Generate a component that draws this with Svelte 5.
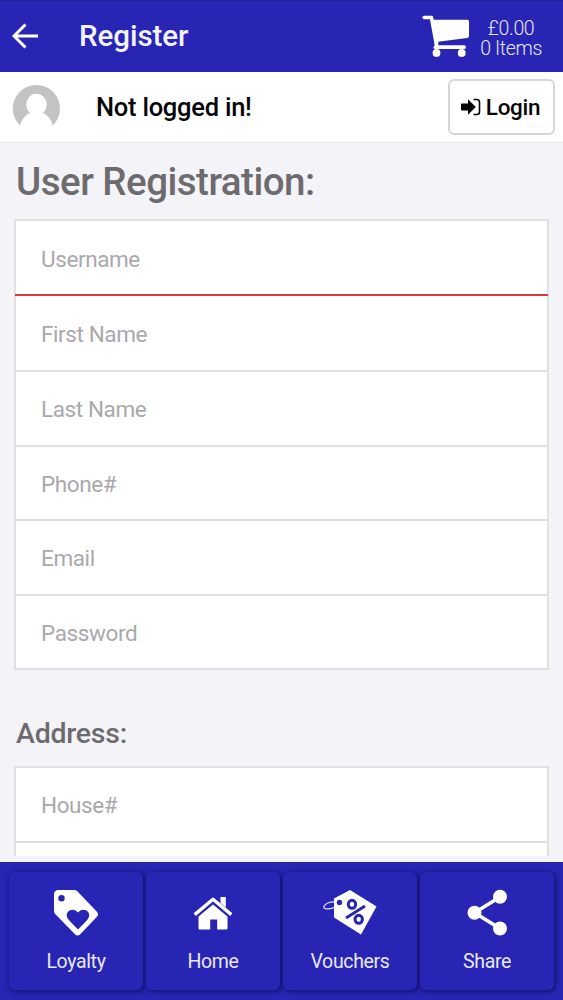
<script>
  const userFields = [
    { label: 'Username', type: 'text', invalid: true },
    { label: 'First Name', type: 'text' },
    { label: 'Last Name', type: 'text' },
    { label: 'Phone#', type: 'tel' },
    { label: 'Email', type: 'email' },
    { label: 'Password', type: 'password' }
  ];

  const addressFields = [
    { label: 'House#', type: 'text' },
    { label: 'Street', type: 'text' }
  ];

  const tabs = ['Loyalty', 'Home', 'Vouchers', 'Share'];

  let basket = $state({ total: 0, items: 0 });
</script>

{#snippet fieldList(fields)}
  <div class="list">
    {#each fields as field}
      <div class="item" class:invalid={field.invalid}>
        <input type={field.type} placeholder={field.label} aria-label={field.label} />
      </div>
    {/each}
  </div>
{/snippet}

<div class="page">
  <header class="navbar">
    <button class="back" aria-label="Back">
      <svg width="26" height="26" viewBox="0 0 26 26">
        <path d="M13.5 1.5 2 13l11.5 11.5M2 13h24" fill="none" stroke="#fff" stroke-width="3" />
      </svg>
    </button>
    <h1>Register</h1>
    <div class="basket">
      <svg width="48" height="42" viewBox="0 0 48 42">
        <path d="M2.2 2.500h7.300l4.700 26" fill="none" stroke="#fff" stroke-width="3.600" stroke-linecap="round" stroke-linejoin="round" />
        <path d="M10.500 4.800h34.800q1.700 0 1.700 1.800v14.200q0 1.800-1.800 2.100L14 27z" fill="#fff" />
        <path d="M14.500 25v6" stroke="#fff" stroke-width="3.600" />
        <path d="M13.500 32.200h28.500" stroke="#fff" stroke-width="3.800" stroke-linecap="round" />
        <circle cx="14.500" cy="37.900" r="3.900" fill="#fff" />
        <circle cx="39.700" cy="37.900" r="3.900" fill="#fff" />
      </svg>
      <div class="totals">
        £{basket.total.toFixed(2)}<br />{basket.items} Items
      </div>
    </div>
  </header>

  <section class="userbar">
    <svg class="avatar" width="48" height="48" viewBox="0 0 48 48">
      <path
        d="M8 42.500A23.600 23.600 0 1 1 40.800 42.500C39 36.500 36 32 30.800 30A10.200 10.800 0 1 0 18.200 30C13 32 9.800 36.500 8 42.500z"
        fill="#c4c3c3"
      />
    </svg>
    <span class="status">Not logged in!</span>
    <button class="login">
      <svg width="20" height="18" viewBox="0 0 20 18">
        <path d="M.8 5.500H7V1.300L14.800 9 7 16.700v-4.200H.8q-.8 0-.8-.8V6.300q0-.8.8-.8z" fill="#000" />
        <path d="M12.500 1.500h3.200q2.800 0 2.800 2.800v9.400q0 2.800-2.800 2.800h-3.200" fill="none" stroke="#000" stroke-width="1.600" />
      </svg>
      Login
    </button>
  </section>

  <main class="content">
    <h2>User Registration:</h2>
    {@render fieldList(userFields)}

    <h3>Address:</h3>
    {@render fieldList(addressFields)}
  </main>

  <footer class="tabbar">
    {#each tabs as tab}
      <button class="tab">
        <svg width="56" height="48" viewBox="0 0 56 48">
          {#if tab === 'Loyalty'}
            <path
              fill="#fff"
              fill-rule="evenodd"
              d="M10.500 1H26q2 0 3.300 1.300L48.700 22.500q2.700 2.800 0 5.600L32.300 45.300q-2.700 2.600-5.300 0L7.400 25.300Q6 23.800 6 22V5.500Q6 1 10.500 1zM13.500 6a3.200 3.200 0 1 0 0 6.400 3.200 3.200 0 1 0 0-6.400zM30 40.500 20.800 31C16 25.500 20.500 20.500 25 20.800Q28 21 30 23.600Q32 21 35 20.800C39.500 20.500 44 25.500 39.200 31z"
            />
          {:else if tab === 'Home'}
            <path
              fill="#fff"
              d="M13.500 27.500 28 15.500 42.500 27.500V39.500q0 1-1 1H32.200V30.500H25.200V40.500H14.500q-1 0-1-1z"
            />
            <path fill="#fff" d="M35.500 8h5.300v10.500l-5.300-4.500z" />
            <path
              d="M9.700 25.600 28 10.200 46.300 25.600"
              fill="none"
              stroke="#fff"
              stroke-width="3.400"
              stroke-linejoin="round"
            />
            <path d="M11.400 27.900 28 13.900 44.600 27.900" fill="none" stroke="#2825b5" stroke-width="1.100" />
          {:else if tab === 'Vouchers'}
            <path fill="#fff" d="M12 9.500 28 1 54.500 17.500 39 45.500 12 28.500z" />
            <circle cx="17.500" cy="13.500" r="2.700" fill="#2825b5" />
            <path
              d="M12 18.600C6 20.800 .8 20 1.800 17.400C3 14.500 8 12.800 12 12.800"
              fill="none"
              stroke="#dcdcff"
              stroke-width="1.200"
            />
            <g fill="none" stroke="#2825b5">
              <ellipse cx="30" cy="15.300" rx="3.700" ry="4" stroke-width="3" />
              <ellipse cx="36.700" cy="30.300" rx="3.700" ry="4" stroke-width="3" />
              <path d="M43 17 24 29" stroke-width="2.800" />
            </g>
          {:else}
            <path d="M41 8 15.500 23.700 41 39.500" fill="none" stroke="#fff" stroke-width="3.600" />
            <circle cx="41" cy="7.800" r="7" fill="#fff" />
            <circle cx="15.500" cy="23.700" r="7" fill="#fff" />
            <circle cx="41" cy="39.500" r="7" fill="#fff" />
          {/if}
        </svg>
        <span>{tab}</span>
      </button>
    {/each}
  </footer>
</div>

<style>
  :global(body) {
    margin: 0;
    overflow: hidden;
  }

  .page {
    display: flex;
    flex-direction: column;
    height: 1000px;
    background: #f4f3f7;
    font-family: Roboto, sans-serif;
    overflow: hidden;
  }

  button {
    font-family: inherit;
    border: none;
    padding: 0;
    background: none;
    cursor: pointer;
  }

  svg {
    display: block;
    flex: none;
  }

  h1,
  h2,
  h3 {
    margin: 0;
    font-weight: 500;
  }

  .navbar {
    display: flex;
    align-items: center;
    flex: none;
    height: 72px;
    box-sizing: border-box;
    padding: 0 21px 1px 12px;
    background: #2825b5;
    color: #f3f3ff;
    border-top: 1px solid #201e90;
  }

  h1 {
    margin-left: 41px;
    font-size: 29.5px;
    line-height: 36px;
    letter-spacing: -0.05px;
  }

  .basket {
    display: flex;
    align-items: center;
    gap: 10px;
    margin-left: auto;
  }

  .totals {
    padding-top: 5px;
    font-size: 19.5px;
    font-weight: 300;
    line-height: 19.5px;
    letter-spacing: -0.35px;
    text-align: center;
    color: #e6e6ff;
  }

  .userbar {
    display: flex;
    align-items: center;
    flex: none;
    height: 71px;
    box-sizing: border-box;
    padding: 0 8px 0 12px;
    background: #fff;
    border-bottom: 1px solid #e8e7ea;
  }

  .status {
    margin-left: 36px;
    font-size: 25.5px;
    font-weight: 500;
    letter-spacing: -0.25px;
    color: #050505;
  }

  .login {
    display: flex;
    align-items: center;
    justify-content: center;
    gap: 5px;
    box-sizing: border-box;
    width: 107px;
    height: 56px;
    margin-left: auto;
    padding: 0 2px 1px 0;
    border: 2px solid #d6d5d7;
    border-radius: 6px;
    font-size: 22.5px;
    font-weight: 500;
    letter-spacing: -0.3px;
    color: #050505;
  }

  .content {
    flex: 1;
    min-height: 0;
    padding: 15px 14px 0;
    margin-bottom: 6px;
    overflow: hidden;
  }

  h2 {
    padding-left: 2px;
    margin-bottom: 13px;
    font-size: 38.5px;
    line-height: 48px;
    letter-spacing: -0.5px;
    color: #6d6b70;
  }

  h3 {
    padding-left: 2px;
    margin: 46px 0 13.6px;
    font-size: 28.5px;
    line-height: 36px;
    letter-spacing: -0.25px;
    color: #6d6b70;
  }

  .list {
    border: 2px solid #e0dfe2;
    border-bottom: none;
    background: #fff;
  }

  .item {
    display: flex;
    height: 74.6px;
    box-sizing: border-box;
    border-bottom: 2px solid #e0dfe2;
  }

  .item.invalid {
    height: 75px;
    margin: 0 -1px;
    padding: 0 1px;
    border-bottom-color: #d23a3e;
  }

  .item.invalid + .item {
    height: 76px;
  }

  input {
    flex: 1;
    min-width: 0;
    padding: 2px 25px 0;
    border: none;
    outline: none;
    background: none;
    font-family: inherit;
    font-size: 22.5px;
    letter-spacing: -0.4px;
    color: #333;
  }

  input::placeholder {
    color: #aaa8ac;
    opacity: 1;
  }

  .tabbar {
    display: grid;
    grid-template-columns: repeat(4, 1fr);
    gap: 3px;
    flex: none;
    height: 138px;
    box-sizing: border-box;
    padding: 9px 9px 10px;
    background: #2825b5;
    border-top: 1px solid #242187;
  }

  .tab {
    display: flex;
    flex-direction: column;
    align-items: center;
    padding-top: 17px;
    border-radius: 6px;
    background: #2825b5;
    box-shadow: 1px 1px 4px 1px #15136f;
    color: #e8e8ff;
    font-size: 19.5px;
    letter-spacing: -0.35px;
  }

  .tab span {
    margin-top: 13px;
    line-height: 24px;
  }
</style>
